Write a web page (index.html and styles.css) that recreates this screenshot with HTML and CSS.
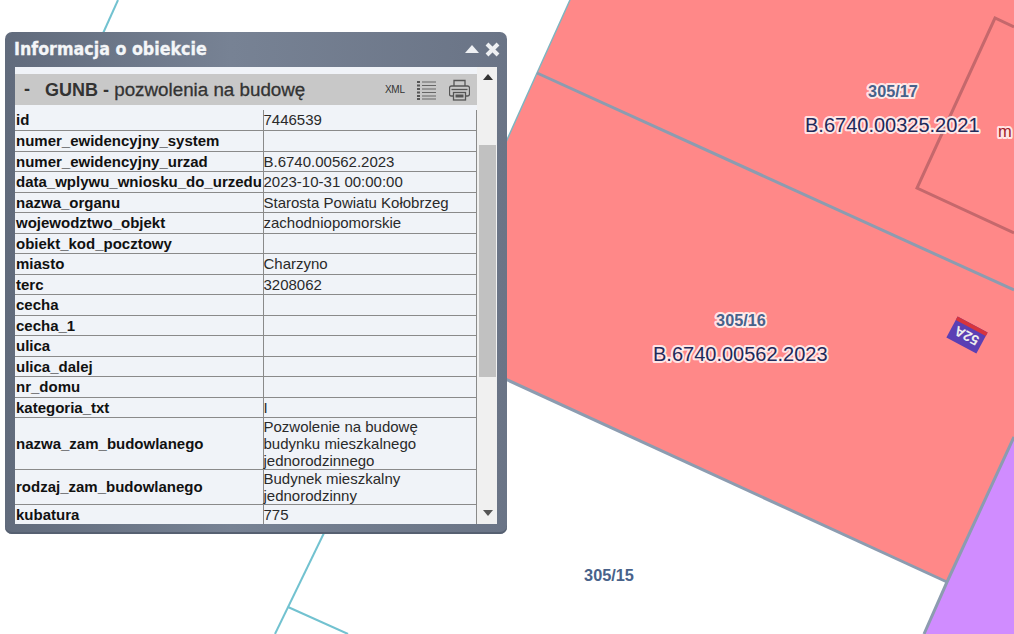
FILE: index.html
```html
<!DOCTYPE html>
<html lang="pl">
<head>
<meta charset="utf-8">
<title>Informacja o obiekcie</title>
<link rel="stylesheet" href="styles.css">
</head>
<body>
<svg class="map" width="1014" height="634" viewBox="0 0 1014 634">
  <polygon class="red" points="570,0 1014,0 1014,437 947,582 440,349 450,267"/>
  <polygon class="purple" points="1014,437 947,582 924,634 1014,634"/>
  <polyline class="edge" points="570,0 537,73 450,267"/>
  <polyline class="teal" points="118,0 100,40"/>
  <polyline class="teal" points="324,533 275,634"/>
  <polyline class="teal" points="288,607 348,634"/>
  <polyline class="parcel" points="537,73 1014,290"/>
  <polyline class="parcel" points="440,349 947,582"/>
  <polyline class="parcel" points="1014,437 947,582 924,634"/>
  <polyline class="building" points="1014,27 995,18 917,188 1014,233"/>
  <text class="plot halo" x="893" y="97">305/17</text>
  <text class="plot halo" x="741" y="326">305/16</text>
  <text class="plot" x="609" y="581">305/15</text>
  <text class="permit halo" x="805" y="132">B.6740.00325.2021</text>
  <text class="permit halo" x="653" y="361">B.6740.00562.2023</text>
  <text class="mark halo" x="998" y="137">m</text>
  <g transform="translate(967 335) rotate(208)">
    <rect class="tag" x="-17" y="-12" width="34" height="24"/>
    <rect class="tag-band" x="-17" y="8" width="34" height="4"/>
    <text class="tag-text" x="0" y="4">52A</text>
  </g>
</svg>

<section class="panel">
  <header class="panel-title">
    <h1>Informacja o obiekcie</h1>
    <div class="panel-controls">
      <svg width="14" height="9" viewBox="0 0 14 9"><polygon class="ctl-fill" points="7,0 14,8 0,8"/></svg>
      <svg width="15" height="15" viewBox="0 0 15 15"><path class="ctl-x" d="M2 2 13 13M13 2 2 13"/></svg>
    </div>
  </header>
  <div class="panel-body">
    <div class="content">
      <div class="section-head">
        <span class="collapse">-</span>
        <h2><b>GUNB -</b> pozwolenia na budowę</h2>
        <div class="tools">
          <span class="xml">XML</span>
          <svg width="19" height="20" viewBox="0 0 19 20">
            <path class="list-dots" d="M0 2h3M0 5.500h3M0 9h3M0 12.500h3M0 16h3M0 19h3"/>
            <path class="list-lines" d="M5 2h14M5 5.500h14M5 9h14M5 12.500h14M5 16h14M5 19h14"/>
          </svg>
          <svg width="21" height="22" viewBox="0 0 21 22">
            <path class="print" d="M5 7V1.500h11V7M4 17H2.500Q.5 17 .5 15V9q0-2 2-2h16q2 0 2 2v6q0 2-2 2H17"/>
            <rect class="print" x="4.500" y="13.500" width="12" height="7.500"/>
            <rect class="print-dark" x="6.500" y="15.500" width="8" height="3"/>
            <path class="print" d="M2.500 10.500h16"/>
          </svg>
        </div>
      </div>
      <table class="attrs">
        <tbody>
          <tr><th>id</th><td>7446539</td></tr>
          <tr><th>numer_ewidencyjny_system</th><td></td></tr>
          <tr><th>numer_ewidencyjny_urzad</th><td>B.6740.00562.2023</td></tr>
          <tr><th>data_wplywu_wniosku_do_urzedu</th><td>2023-10-31 00:00:00</td></tr>
          <tr><th>nazwa_organu</th><td>Starosta Powiatu Kołobrzeg</td></tr>
          <tr><th>wojewodztwo_objekt</th><td>zachodniopomorskie</td></tr>
          <tr><th>obiekt_kod_pocztowy</th><td></td></tr>
          <tr><th>miasto</th><td>Charzyno</td></tr>
          <tr><th>terc</th><td>3208062</td></tr>
          <tr><th>cecha</th><td></td></tr>
          <tr><th>cecha_1</th><td></td></tr>
          <tr><th>ulica</th><td></td></tr>
          <tr><th>ulica_dalej</th><td></td></tr>
          <tr><th>nr_domu</th><td></td></tr>
          <tr><th>kategoria_txt</th><td>I</td></tr>
          <tr><th>nazwa_zam_budowlanego</th><td>Pozwolenie na budowę budynku mieszkalnego jednorodzinnego</td></tr>
          <tr><th>rodzaj_zam_budowlanego</th><td>Budynek mieszkalny jednorodzinny</td></tr>
          <tr><th>kubatura</th><td>775</td></tr>
        </tbody>
      </table>
    </div>
    <div class="scrollbar">
      <span class="arrow arrow-up"></span>
      <div class="track"><div class="thumb"></div></div>
      <span class="arrow arrow-down"></span>
    </div>
  </div>
</section>
</body>
</html>
```
FILE: styles.css
```css
* { box-sizing: border-box; }
html, body { margin: 0; height: 100%; }
body {
  width: 1014px;
  height: 634px;
  overflow: hidden;
  background: #fff;
  position: relative;
  font-family: "Liberation Sans", Arial, sans-serif;
}

/* map canvas */
.map { position: absolute; left: 0; top: 0; display: block; }
.red { fill: #ff8888; }
.purple { fill: #d08cff; }
.edge { fill: none; stroke: #7fb4c0; stroke-width: 1.500; }
.teal { fill: none; stroke: #72c2d0; stroke-width: 2; }
.parcel { fill: none; stroke: #8c9cb0; stroke-width: 3; }
.building { fill: none; stroke: #c5686c; stroke-width: 3; }
.plot { font: bold 16.300px "Liberation Sans", Arial, sans-serif; fill: #48628a; text-anchor: middle; }
.permit { font: 20px "Liberation Sans", Arial, sans-serif; fill: #1e2a5a; }
.mark { font: 16.500px "Liberation Sans", Arial, sans-serif; fill: #a01c28; }
.halo { paint-order: stroke; stroke: rgba(255, 255, 255, .8); stroke-width: 4px; stroke-linejoin: round; }
.tag { fill: #5b3fb4; }
.tag-band { fill: #d8343c; }
.tag-text { font: bold 14px "Liberation Sans", Arial, sans-serif; fill: #eee; text-anchor: middle; }

/* floating panel */
.panel {
  position: absolute;
  left: 5px;
  top: 32px;
  width: 502px;
  height: 502px;
  padding: 0 10px 10px;
  border-radius: 7px;
  background: linear-gradient(90deg, #616b7c, #778294 45%, #6a7486);
  display: flex;
  flex-direction: column;
  box-shadow: inset 0 -2px 0 #566071;
}
.panel-title {
  flex: 0 0 35px;
  display: flex;
  align-items: center;
  justify-content: space-between;
}
.panel-title h1 {
  margin: 0 0 1px -1px;
  font: bold 17.700px "DejaVu Sans Condensed", "DejaVu Sans", Verdana, sans-serif;
  font-stretch: condensed;
  color: #f4f6f8;
  -webkit-text-stroke: .3px #f4f6f8;
}
.panel-controls { display: flex; align-items: center; gap: 6px; margin-right: -3px; }
.ctl-fill { fill: #eef0f3; }
.ctl-x { stroke: #eef0f3; stroke-width: 4; fill: none; }

.panel-body { flex: 1; min-height: 0; display: flex; background: #f0f0f0; }
.content {
  width: 462px;
  height: 100%;
  overflow: hidden;
  background: #f0f3f8;
  padding-top: 7px;
}
.section-head {
  height: 31px;
  background: #c8c8c8;
  display: flex;
  align-items: center;
  padding-left: 9px;
  color: #333;
  font-size: 18px;
  font-weight: bold;
}
.collapse { width: 21px; }
.section-head h2 { margin: 0; font-size: 18.800px; font-weight: normal; flex: 1; -webkit-text-stroke: .3px #333; }
.section-head b { font-size: 18px; font-weight: bold; -webkit-text-stroke: 0; }
.tools { display: flex; align-items: center; margin-right: 7px; }
.xml { font-size: 10px; font-weight: normal; letter-spacing: -.3px; width: 32px; color: #333; }
.tools svg:last-child { margin-left: 13px; }
.list-dots { stroke: #555; stroke-width: 2; fill: none; }
.list-lines { stroke: #666; stroke-width: 1; fill: none; }
.print { fill: none; stroke: #555; stroke-width: 1.300; }
.print-dark { fill: #555; }

.attrs {
  margin-top: 5px;
  width: 462px;
  border-collapse: collapse;
  table-layout: fixed;
  font-size: 15px;
  line-height: 17px;
  color: #2a2a2a;
}
.attrs tr { border-bottom: 1px solid #8a8a8a; }
.attrs tr:nth-child(odd) { height: 20px; }
.attrs tr:nth-child(even) { height: 21px; }
.attrs tr:nth-child(16) { height: 52px; }
.attrs tr:nth-child(17) { height: 35px; }
.attrs th, .attrs td { padding: 0; vertical-align: middle; text-align: left; }
.attrs th { width: 248px; padding-left: 1px; font-weight: bold; color: #111; white-space: nowrap; overflow: hidden; }
.attrs td { border-left: 1px solid #8a8a8a; border-right: 1px solid #8a8a8a; }

.scrollbar {
  width: 20px;
  display: flex;
  flex-direction: column;
  align-items: center;
  padding: 7px 0 8px 2px;
}
.arrow { width: 0; height: 0; border-left: 5px solid transparent; border-right: 5px solid transparent; }
.arrow-up { border-bottom: 6px solid #333; }
.arrow-down { border-top: 6px solid #555; }
.track { flex: 1; width: 100%; padding-top: 65px; }
.thumb { height: 232px; margin: 0 1px 0 0; background: #c1c1c1; }
```
